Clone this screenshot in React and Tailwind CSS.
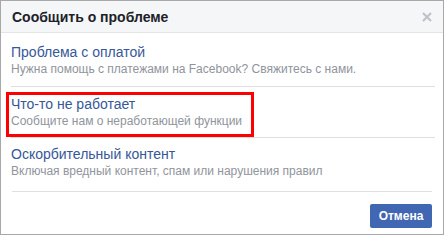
import React from 'react';

const options = [
  { title: 'Проблема с оплатой', desc: 'Нужна помощь с платежами на Facebook? Свяжитесь с нами.', pad: 'pt-[10px] pb-[9px] border-b border-[#dddfe2]' },
  { title: 'Что-то не работает', desc: 'Сообщите нам о неработающей функции', pad: 'pt-2 pb-2 border-b border-[#dddfe2]', marked: true },
  { title: 'Оскорбительный контент', desc: 'Включая вредный контент, спам или нарушения правил', pad: 'pt-[7px] pb-[12px]' },
];

const CloseIcon = () => (
  <svg width="10" height="10" viewBox="0 0 10 10">
    <path d="M1 1 L9 9 M9 1 L1 9" stroke="#bec3c9" strokeWidth="2.2" strokeLinecap="butt" />
  </svg>
);

export default function App() {
  return (
    <div className="w-[444px] h-[235px] border border-[#a8a8a8] bg-white flex flex-col font-['Liberation_Sans',Arial,sans-serif]">
      {/* header */}
      <div className="h-[32px] shrink-0 bg-[#f5f6f7] border-b border-[#e5e5e5] flex items-center justify-between pl-[11px] pr-[11px]">
        <span className="text-[14px] font-bold text-[#1d2129] leading-[18px]">Сообщить о проблеме</span>
        <CloseIcon />
      </div>

      {/* options */}
      <div className="pl-[10px] pr-[8px]">
        {options.map((o) => (
          <div key={o.title} className={`relative ${o.pad}`}>
            <div className="text-[14px] leading-[18px] text-[#365899]">{o.title}</div>
            <div className="text-[12px] leading-[16px] text-[#90949c]">{o.desc}</div>
            {o.marked && (
              <div className="absolute left-[-5px] top-[5px] bottom-0 w-[248px] border-[3px] border-[#ff0000]" />
            )}
          </div>
        ))}
      </div>

      {/* footer */}
      <div className="mx-[11px] border-t border-[#dddfe2] pt-3 flex justify-end">
        <button className="w-[62px] h-[24px] rounded-[2px] bg-[#4267b2] text-white text-[12px] font-bold leading-none">
          Отмена
        </button>
      </div>
    </div>
  );
}
